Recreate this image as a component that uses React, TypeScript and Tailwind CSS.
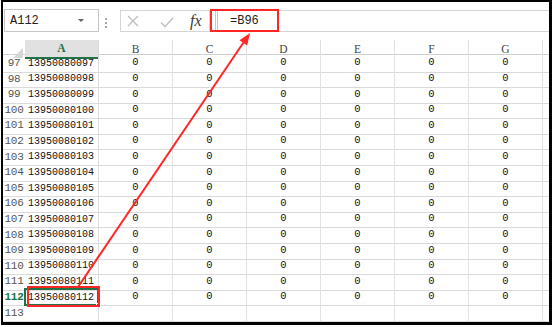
import React from "react";

const RED = "#ff2626";

export default function App() {
  const rows = Array.from({ length: 17 }, (_, i) => 97 + i);
  const cols = ["B", "C", "D", "E", "F", "G"];
  return (
    <div className="relative w-[554px] h-[327px] bg-white overflow-hidden font-['Liberation_Mono',monospace]">
      <div className="ml-[1px] w-[551px] h-[325px] border-t-2 border-l-2 border-r-[3px] border-b-[3px] border-black flex flex-col overflow-hidden">
        {/* formula bar */}
        <div className="h-[38px] flex items-start shrink-0">
          <div className="mt-[7px] ml-[1px] w-[95px] h-[23px] border border-[#c6c6c6] flex items-center pl-[5px] text-[12px] text-[#222]">
            <span>A112</span>
            <span className="ml-auto mr-[14px] w-0 h-0 border-l-[3px] border-r-[3px] border-t-[3px] border-l-transparent border-r-transparent border-t-[#666]" />
          </div>
          <div className="ml-[6px] mt-[16px] flex flex-col gap-[2px]">
            <span className="w-[2px] h-[2px] bg-[#a8a8a8]" />
            <span className="w-[2px] h-[2px] bg-[#a8a8a8]" />
            <span className="w-[2px] h-[2px] bg-[#a8a8a8]" />
          </div>
          <div className="ml-[13px] mt-[8px] w-[90px] h-[22px] border border-[#d5d5d5] flex items-center">
            <svg className="ml-[6px]" width="12" height="12" viewBox="0 0 12 12">
              <path d="M1 1 L11 11 M11 1 L1 11" stroke="#bdbdbd" strokeWidth="1.3" fill="none" />
            </svg>
            <svg className="ml-[21px] mt-[3px]" width="14" height="11" viewBox="0 0 14 11">
              <path d="M1 5.5 L5 9.5 L13 1" stroke="#c4c4c4" strokeWidth="1.6" fill="none" />
            </svg>
            <span className="ml-[16px] font-['Liberation_Serif',serif] italic text-[16px] leading-none text-[#3a3a3a]">fx</span>
          </div>
          <div className="mt-[8px] flex-1 h-[22px] border-y border-[#d5d5d5] flex items-center">
            <span className="ml-[5px] w-[1px] h-full bg-[#c8c8c8]" />
            <span className="ml-[1px] w-[1px] h-full bg-[#c8c8c8]" />
            <span className="ml-[12px] text-[12px] text-[#222]">=B96</span>
          </div>
        </div>
        {/* header row */}
        <div className="h-[15px] shrink-0 grid grid-cols-[22px_repeat(7,74px)_6px] border-b border-[#cfcfcf] font-['Liberation_Serif',serif] text-[11.5px] text-[#444]">
          <div className="relative">
            <span className="absolute right-[2px] bottom-[1px] w-0 h-0 border-l-[10px] border-l-transparent border-b-[10px] border-b-[#d6d6d6]" />
          </div>
          <div className="bg-[#e1e1e1] border-b-2 border-[#217346] text-[#217346] font-bold flex items-center justify-center border-r border-r-[#d8d8d8]">A</div>
          {cols.map((c) => (
            <div key={c} className="flex items-center justify-center border-r border-[#e0e0e0]">{c}</div>
          ))}
          <div />
        </div>
        {/* body */}
        {rows.map((r) => {
          const sel = r === 112;
          const hasData = r <= 112;
          return (
            <div key={r} className="h-[15.6px] shrink-0 grid grid-cols-[22px_repeat(7,74px)_6px]">
              <div className={`flex items-center justify-center border-b border-[#dadada] text-[11px] tracking-[-0.3px] ${sel ? "text-[#217346] font-bold" : "text-[#555]"}`}>{r}</div>
              <div className="relative flex items-center pl-[3px] border-b border-r border-b-[#dadada] border-r-[#dcdcdc] text-[10px] text-[#111]">
                {hasData ? `13950080${String(r).padStart(3, "0")}` : ""}
                {sel && (
                  <>
                    <span className="absolute -left-[1px] -top-[1px] -right-[1px] -bottom-[1px] border-2 border-[#217346]" />
                    <span className="absolute -right-[3px] -bottom-[3px] w-[5px] h-[5px] bg-[#217346] border border-white" />
                  </>
                )}
              </div>
              {cols.map((c) => (
                <div key={c} className="flex items-center justify-center border-b border-r border-b-[#dadada] border-r-[#e2e2e2] text-[10.5px] text-[#111]">
                  {hasData ? "0" : ""}
                </div>
              ))}
              <div className="border-b border-[#dadada]" />
            </div>
          );
        })}
      </div>
      {/* annotations */}
      <div className="absolute left-[210px] top-[9px] w-[69px] h-[23px] border-2 border-[#ff2626]" />
      <div className="absolute left-[27px] top-[286px] w-[73px] h-[21px] border-2 border-[#ff2626]" />
      <svg className="absolute left-0 top-0 pointer-events-none" width="554" height="327" viewBox="0 0 554 327">
        <line x1="78" y1="287" x2="243.5" y2="42.5" stroke={RED} strokeWidth="2" />
        <polygon points="250,33 247.2,45.5 239.5,40.3" fill={RED} />
      </svg>
    </div>
  );
}
